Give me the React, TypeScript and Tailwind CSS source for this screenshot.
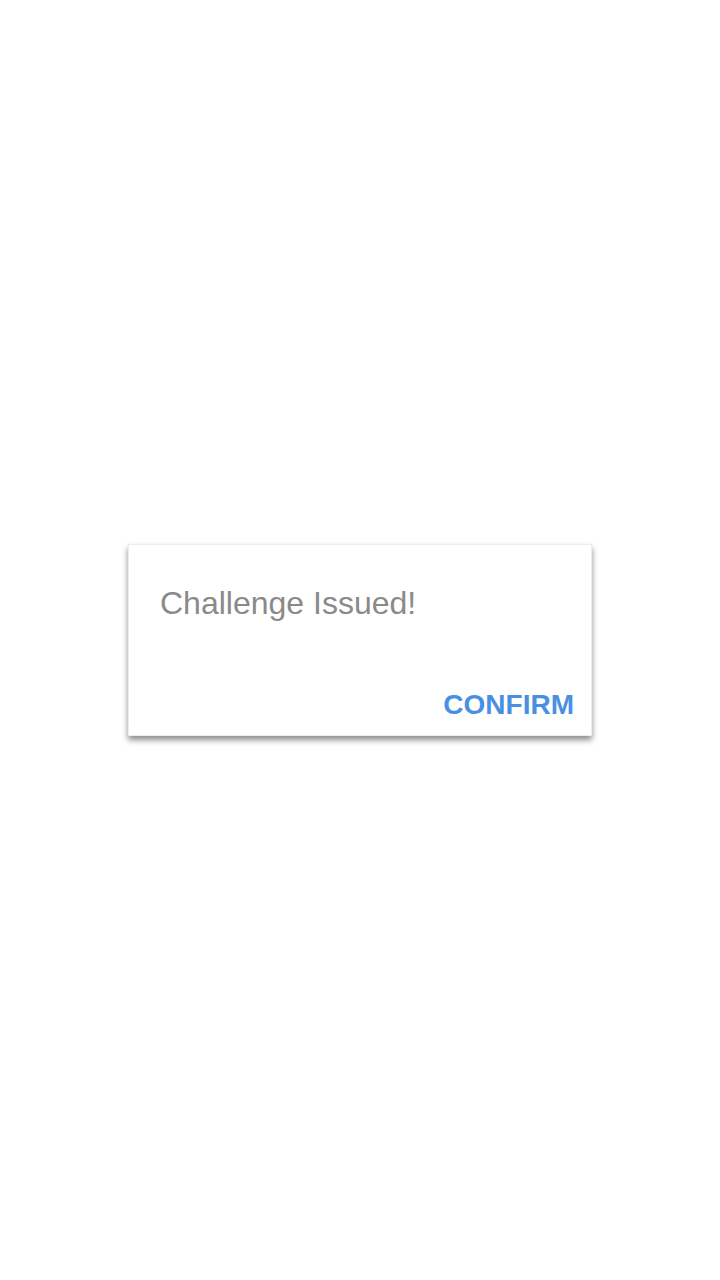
import React from "react";

export default function App() {
  return (
    <div
      className="w-[720px] h-[1280px] bg-white flex items-center justify-center"
      style={{ fontFamily: '"Liberation Sans", Arial, sans-serif' }}
    >
      <div className="w-[464px] h-[192px] bg-white border border-[#ececec] shadow-[0_4px_6px_rgba(0,0,0,0.45)] flex flex-col">
        <div className="pt-[42px] pl-[31px] text-[32px] leading-[32px] text-[#8a8a8a]">
          Challenge Issued!
        </div>
        <div className="flex-1" />
        <div className="flex justify-end pr-[17px] pb-[16px]">
          <span className="text-[28px] leading-[28px] font-bold text-[#4a90e2]">CONFIRM</span>
        </div>
      </div>
    </div>
  );
}
